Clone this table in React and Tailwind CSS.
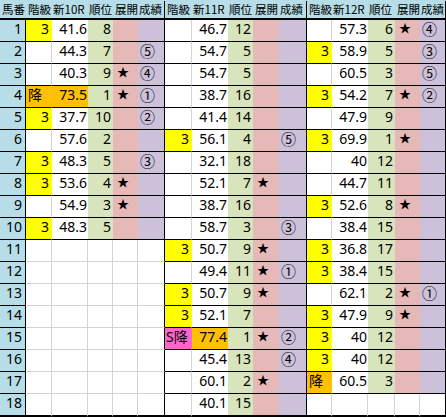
import React from "react";

const COLS =
  "grid grid-cols-[26px_26px_36px_25px_25px_27px_27px_36px_25px_26px_28px_25px_36px_27px_25px_26px]";

// [階級, 新R, 順位, 展開, 成績, 新R orange?]
const race10 = [
  ["3", "41.6", "8", "", ""],
  ["", "44.3", "7", "", "⑤"],
  ["", "40.3", "9", "★", "④"],
  ["降", "73.5", "1", "★", "①", true],
  ["3", "37.7", "10", "", "②"],
  ["", "57.6", "2", "", ""],
  ["3", "48.3", "5", "", "③"],
  ["3", "53.6", "4", "★", ""],
  ["", "54.9", "3", "★", ""],
  ["3", "48.3", "5", "", ""],
];

const race11 = [
  ["", "46.7", "12", "", ""],
  ["", "54.7", "5", "", ""],
  ["", "54.7", "5", "", ""],
  ["", "38.7", "16", "", ""],
  ["", "41.4", "14", "", ""],
  ["3", "56.1", "4", "", "⑤"],
  ["", "32.1", "18", "", ""],
  ["", "52.1", "7", "★", ""],
  ["", "38.7", "16", "", ""],
  ["", "58.7", "3", "", "③"],
  ["3", "50.7", "9", "★", ""],
  ["", "49.4", "11", "★", "①"],
  ["3", "50.7", "9", "★", ""],
  ["3", "52.1", "7", "", ""],
  ["S降", "77.4", "1", "★", "②", true],
  ["", "45.4", "13", "", "④"],
  ["", "60.1", "2", "★", ""],
  ["", "40.1", "15", "", ""],
];

const race12 = [
  ["", "57.3", "6", "★", "④"],
  ["3", "58.9", "5", "", "③"],
  ["", "60.5", "3", "", "⑤"],
  ["3", "54.2", "7", "★", "②"],
  ["", "47.9", "9", "", ""],
  ["3", "69.9", "1", "★", ""],
  ["", "40", "12", "", ""],
  ["", "44.7", "11", "", ""],
  ["3", "52.6", "8", "★", ""],
  ["", "38.4", "15", "", ""],
  ["3", "36.8", "17", "", ""],
  ["3", "38.4", "15", "", ""],
  ["", "62.1", "2", "★", "①"],
  ["3", "47.9", "9", "★", ""],
  ["3", "40", "12", "", ""],
  ["3", "40", "12", "", ""],
  ["降", "60.5", "3", "", ""],
];

const races = [race10, race11, race12];

function Cell({ className = "", children }) {
  return (
    <div className={`flex items-center overflow-hidden whitespace-nowrap pb-[3px] ${className}`}>
      {children}
    </div>
  );
}

function classFill(v) {
  if (v === "3") return "bg-[#ffff00] border-r-[#ffff00] justify-end pr-[2px]";
  if (v === "降") return "bg-[#ffc000] border-r-[#ffc000] pl-[2px]";
  if (v === "S降") return "bg-[#ff66cc] border-r-[#ff66cc] pl-[1px]";
  return "bg-white border-r-[#d4d4d4]";
}

function GroupCells({ row, last }) {
  if (!row) {
    const b = last ? "border-b-2 border-b-black" : "border-b border-b-[#d4d4d4]";
    return (
      <>
        <Cell className={`bg-white border-r border-r-[#d4d4d4] ${b}`} />
        <Cell className={`bg-white border-r border-r-[#d4d4d4] ${b}`} />
        <Cell className={`bg-white border-r border-r-[#d4d4d4] ${b}`} />
        <Cell className={`bg-white border-r border-r-[#d4d4d4] ${b}`} />
        <Cell className={`bg-white border-r border-r-black ${b}`} />
      </>
    );
  }
  const b = last ? "border-b-2 border-b-black" : "border-b border-b-black";
  const [kyu, val, rank, ten, res, orange] = row;
  return (
    <>
      <Cell className={`border-r ${classFill(kyu)} ${b}`}>{kyu}</Cell>
      <Cell className={`justify-end pr-[1px] ${orange ? "bg-[#ffc000]" : "bg-white"} ${b}`}>
        {val}
      </Cell>
      <Cell className={`justify-end pr-[2px] bg-[#d8e4bc] ${b}`}>{rank}</Cell>
      <Cell className={`pl-[4px] text-[12px] bg-[#e6b8b7] ${b}`}>{ten}</Cell>
      <Cell className={`pl-[2px] text-[15px] bg-[#ccc0da] border-r border-r-black ${b}`}>{res}</Cell>
    </>
  );
}

function HeaderGroup({ race }) {
  return (
    <>
      <div className="pl-[2px] h-full flex items-center">階級</div>
      <div className="pl-[1px] h-full flex items-center">新{race}R</div>
      <div className="pl-[1px] h-full flex items-center">順位</div>
      <div className="pl-[2px] h-full flex items-center">展開</div>
      <div className="pl-[1px] h-full flex items-center border-r border-r-black">成績</div>
    </>
  );
}

export default function App() {
  return (
    <div className="w-[446px] h-[418px] overflow-hidden bg-white text-black font-['Noto_Sans','Noto_Sans_CJK_JP',sans-serif] text-[14px] leading-none">
      <div
        className={`${COLS} h-[20px] bg-[#b7dee8] border-b-2 border-b-black text-[11.5px] whitespace-nowrap pt-[1px] font-['Noto_Sans_CJK_JP',sans-serif]`}
      >
        <div className="pl-[2px] h-full flex items-center">馬番</div>
        <HeaderGroup race={10} />
        <HeaderGroup race={11} />
        <HeaderGroup race={12} />
      </div>
      {Array.from({ length: 18 }, (_, i) => {
        const last = i === 17;
        return (
          <div key={i} className={`${COLS} ${last ? "h-[23px]" : "h-[22px]"}`}>
            <Cell
              className={`justify-end pr-[3px] bg-[#b7dee8] border-r border-r-black ${
                last ? "border-b-2" : "border-b"
              } border-b-black`}
            >
              {i + 1}
            </Cell>
            {races.map((r, gi) => (
              <GroupCells key={gi} row={r[i]} last={last} />
            ))}
          </div>
        );
      })}
    </div>
  );
}
